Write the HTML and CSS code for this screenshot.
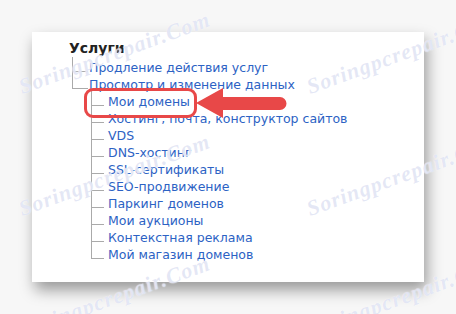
FILE: index.html
```html
<!DOCTYPE html>
<html lang="ru">
  <head>
    <meta charset="UTF-8" />
    <title>Услуги</title>
    <link rel="stylesheet" href="styles.css">
  </head>
  <body>
    <div class="card">
      <h2 class="tree-title">Услуги</h2>
      <ul class="tree">
        <li><a href="#">Продление действия услуг</a></li>
        <li>
          <a href="#">Просмотр и изменение данных</a>
          <ul class="tree tree-sub">
            <li><a href="#">Мои домены</a></li>
            <li><a href="#">Хостинг, почта, конструктор сайтов</a></li>
            <li><a href="#">VDS</a></li>
            <li><a href="#">DNS-хостинг</a></li>
            <li><a href="#">SSL-сертификаты</a></li>
            <li><a href="#">SEO-продвижение</a></li>
            <li><a href="#">Паркинг доменов</a></li>
            <li><a href="#">Мои аукционы</a></li>
            <li><a href="#">Контекстная реклама</a></li>
            <li><a href="#">Мой магазин доменов</a></li>
          </ul>
        </li>
      </ul>
    </div>

    <!-- callout over the screenshot -->
    <div class="highlight"></div>
    <svg class="arrow" width="92" height="34" viewBox="0 0 92 34">
      <path d="M1 16 L28 1 L28 10 L85 10 A6.5 6.5 0 0 1 85 23 L28 23 L28 31 Z" fill="#e84848"/>
    </svg>

    <span class="mark mark-1">Soringpcrepair.Com</span>
    <span class="mark mark-2">Soringpcrepair.Com</span>
    <span class="mark mark-3">Soringpcrepair.Com</span>
    <span class="mark mark-4">Soringpcrepair.Com</span>
    <span class="mark mark-5">Soringpcrepair.Com</span>
    <span class="mark mark-6">Soringpcrepair.Com</span>
  </body>
</html>
```

FILE: styles.css
```css
* {
  margin: 0;
  padding: 0;
  box-sizing: border-box;
}

body {
  font-family: "DejaVu Sans", Verdana, sans-serif;
  background: #f7f7f7;
  width: 456px;
  height: 314px;
  padding: 32px;
  position: relative;
  overflow: hidden;
}

.card {
  background: #fff;
  width: 392px;
  height: 250px;
  padding: 8px 0 0 37px;
  box-shadow: 3px 8px 14px rgba(0, 0, 0, 0.38);
}

.tree-title {
  font-size: 14px;
  font-weight: bold;
  line-height: 17px;
  color: #222;
  margin-bottom: 2px;
}

.tree {
  list-style: none;
  margin-left: 3px;
}

.tree li {
  position: relative;
  padding-left: 17px;
  font-size: 12.5px;
  line-height: 17px;
}

.tree li::before {
  content: "";
  position: absolute;
  left: 0;
  top: 0;
  width: 15px;
  height: 12px;
  border-left: 1px solid #aaa;
  border-bottom: 1px solid #aaa;
}

.tree li:not(:last-child)::after {
  content: "";
  position: absolute;
  left: 0;
  top: 0;
  bottom: 0;
  border-left: 1px solid #aaa;
}

.tree > li:first-child::before {
  top: -2px;
  height: 14px;
}

.tree-sub {
  margin-left: 2px;
}

.tree-sub li::before {
  width: 12px;
}

.tree a {
  color: #2c62c4;
  text-decoration: none;
  white-space: nowrap;
}

.highlight {
  position: absolute;
  left: 84px;
  top: 88px;
  width: 113px;
  height: 30px;
  border: 3px solid #e84848;
  border-radius: 9px;
}

.arrow {
  position: absolute;
  left: 195px;
  top: 87px;
}

.mark {
  position: absolute;
  font-family: "Liberation Serif", serif;
  font-style: italic;
  font-weight: bold;
  font-size: 22px;
  letter-spacing: 1px;
  color: rgba(160, 172, 220, 0.28);
  text-shadow: 0 0 1px #fff;
  transform: rotate(-20deg);
  transform-origin: left bottom;
  white-space: nowrap;
  pointer-events: none;
}

.mark-1 { left: 24px; top: 74px; }
.mark-2 { left: 312px; top: 74px; }
.mark-3 { left: 24px; top: 196px; }
.mark-4 { left: 312px; top: 196px; }
.mark-5 { left: 24px; top: 318px; }
.mark-6 { left: 312px; top: 318px; }
```
